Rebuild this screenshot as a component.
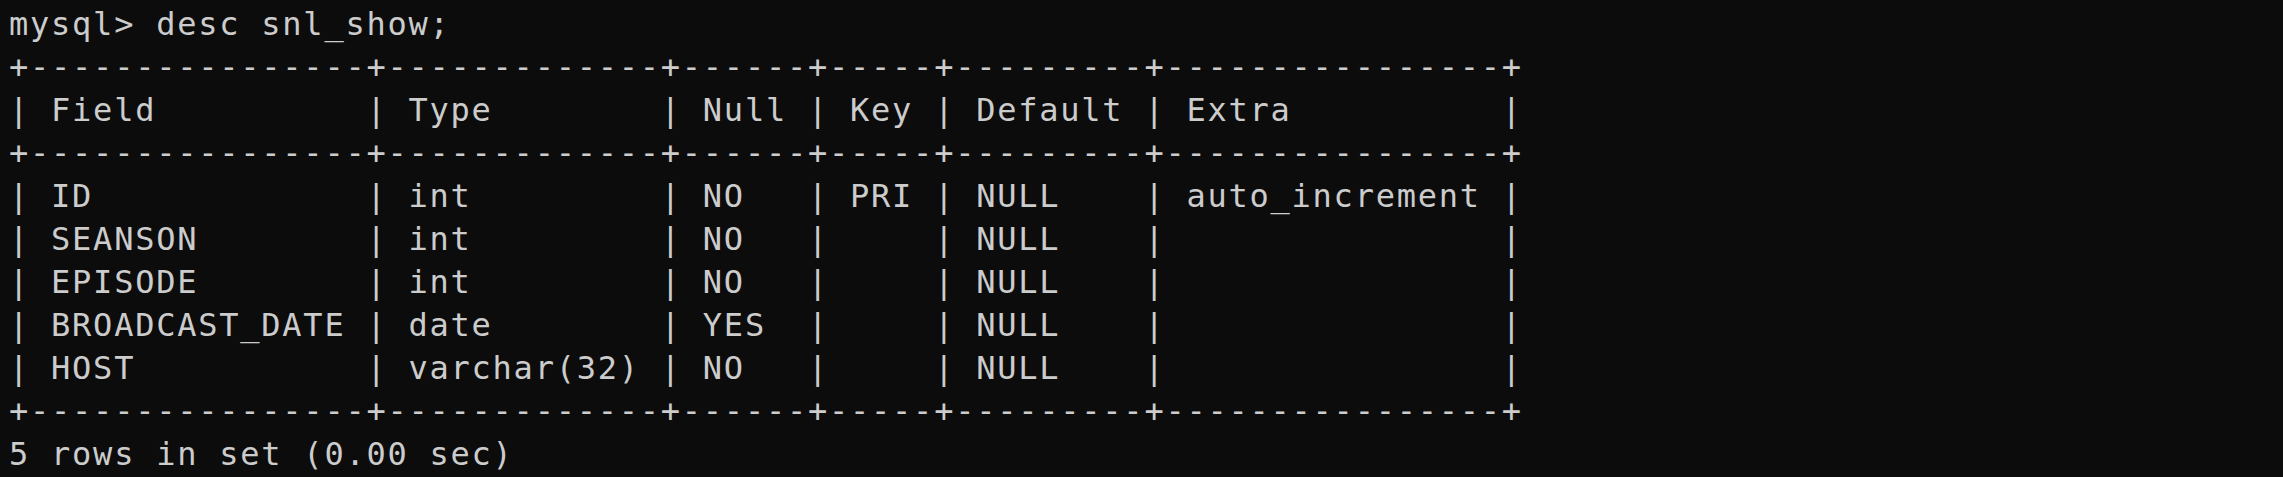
const lines = [
  'mysql> desc snl_show;',
  '+----------------+-------------+------+-----+---------+----------------+',
  '| Field          | Type        | Null | Key | Default | Extra          |',
  '+----------------+-------------+------+-----+---------+----------------+',
  '| ID             | int         | NO   | PRI | NULL    | auto_increment |',
  '| SEANSON        | int         | NO   |     | NULL    |                |',
  '| EPISODE        | int         | NO   |     | NULL    |                |',
  '| BROADCAST_DATE | date        | YES  |     | NULL    |                |',
  '| HOST           | varchar(32) | NO   |     | NULL    |                |',
  '+----------------+-------------+------+-----+---------+----------------+',
  '5 rows in set (0.00 sec)',
];

export default function App() {
  return (
    <div className="h-[477px] w-full overflow-hidden bg-[#0c0c0c] pl-[9px] pt-[3px] text-[#cccccc]">
      <div className="font-['DejaVu_Sans_Mono',monospace] text-[32px] leading-[43px] tracking-[1.76px]">
        {lines.map((l, i) => (
          <div key={i} className="whitespace-pre">{l}</div>
        ))}
      </div>
    </div>
  );
}
